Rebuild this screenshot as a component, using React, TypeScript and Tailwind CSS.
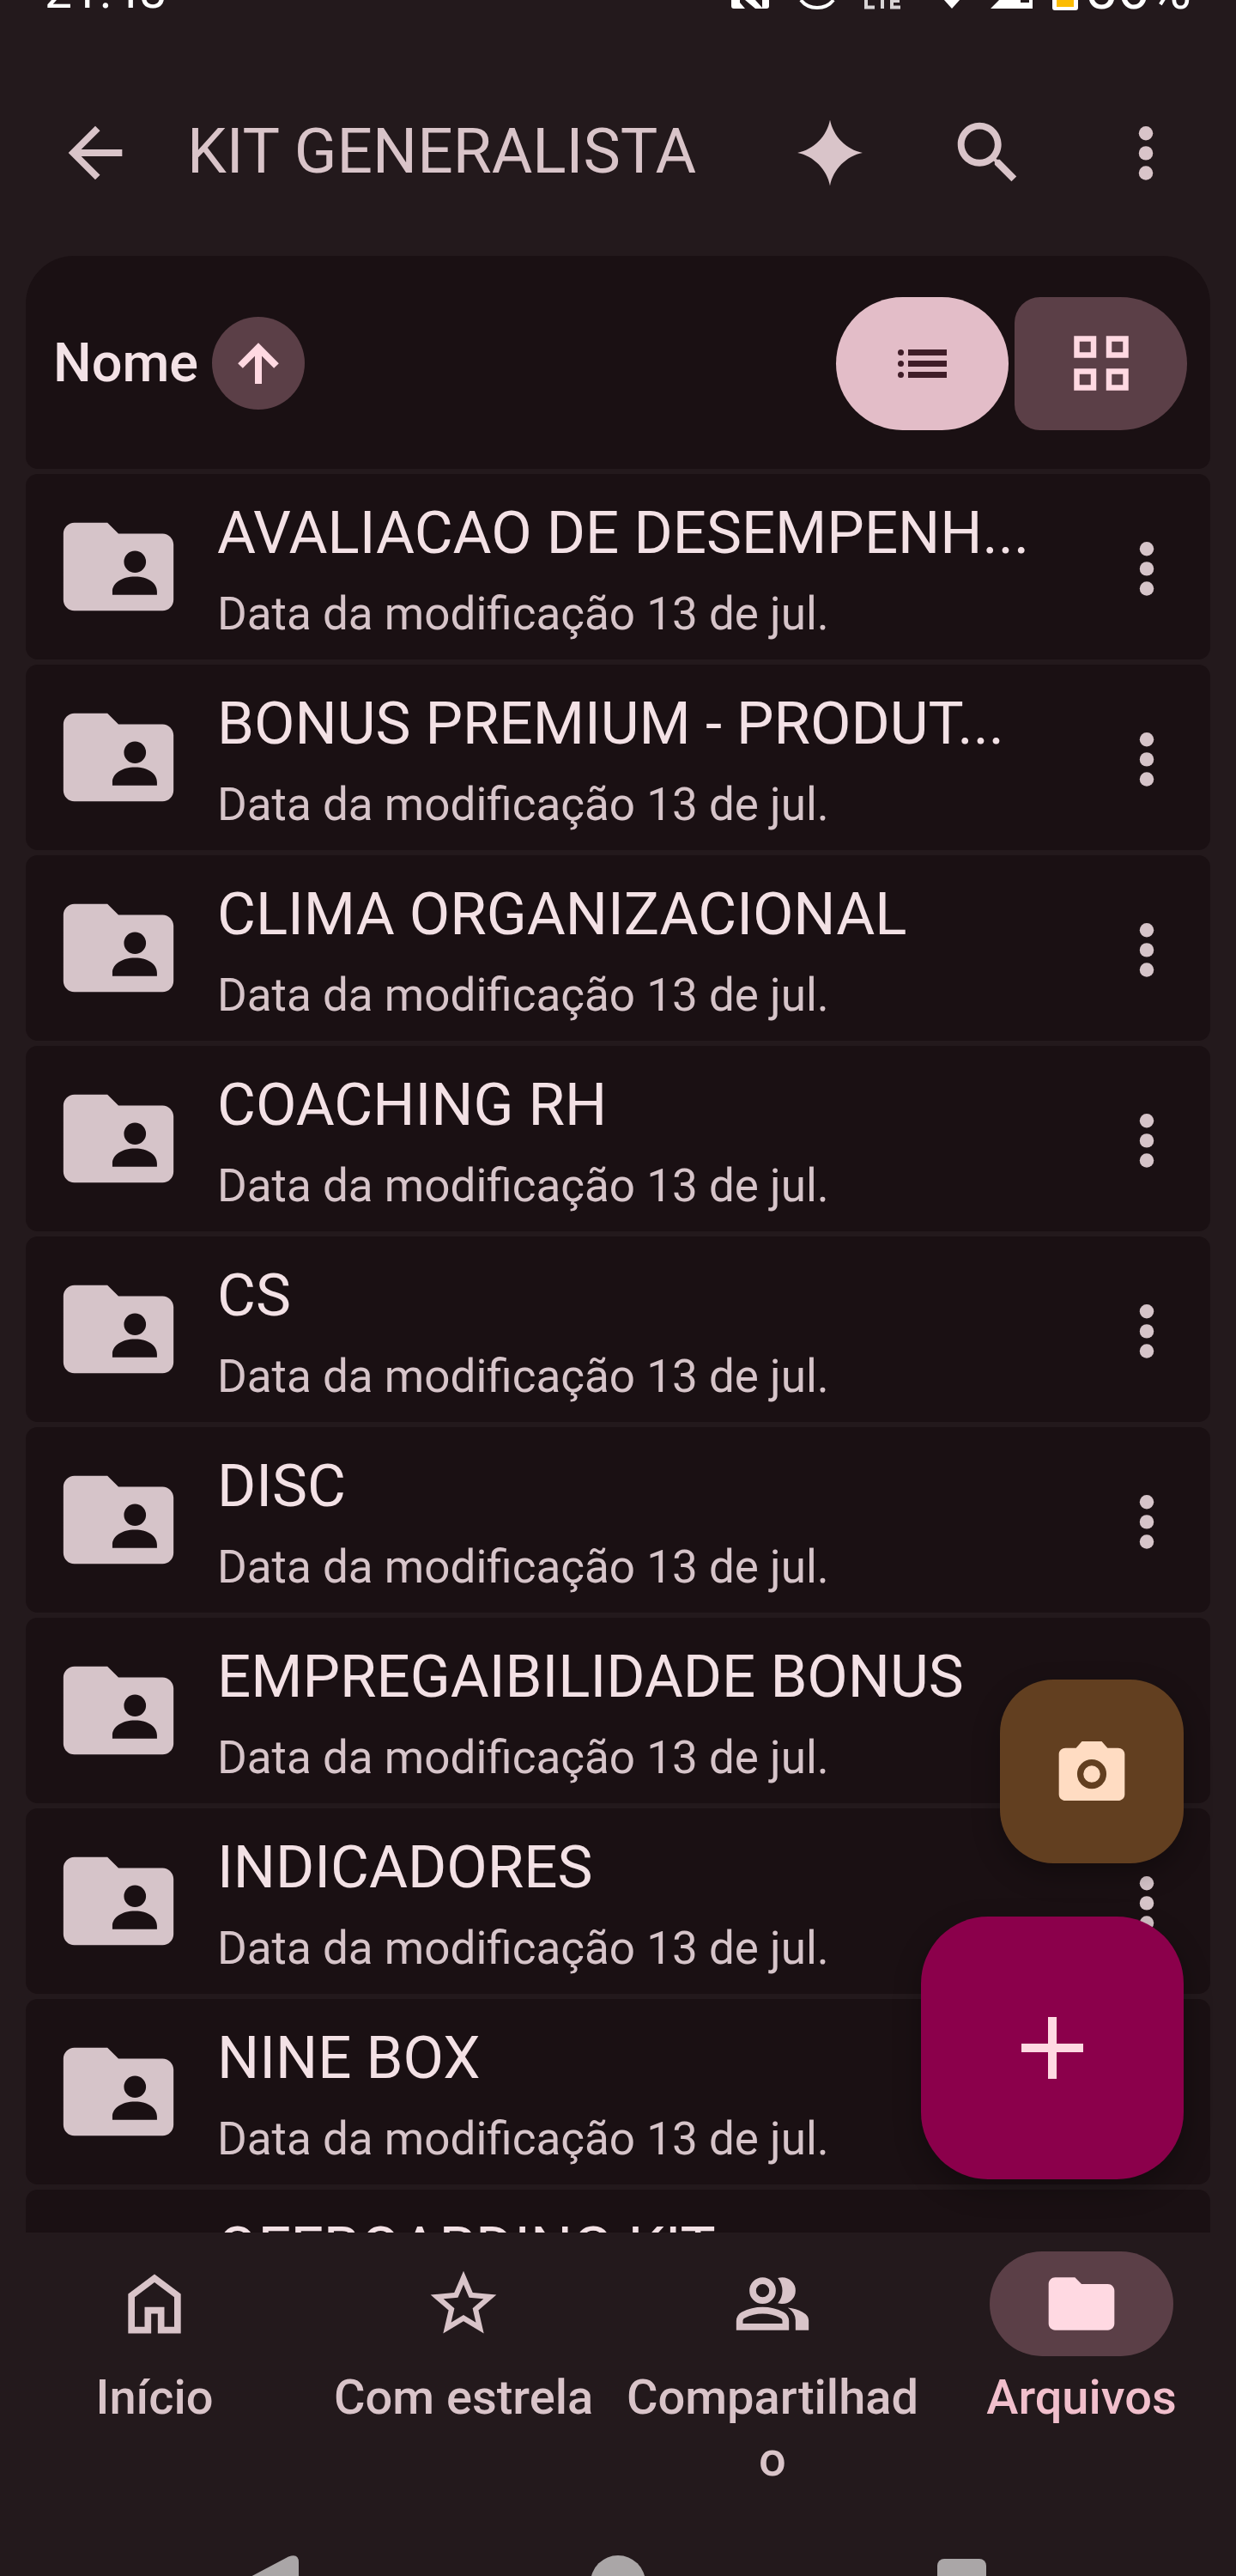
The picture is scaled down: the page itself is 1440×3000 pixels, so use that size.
import type { ReactNode } from "react";
import clsx from "clsx";

const MODIFIED = "Data da modificação 13 de jul.";

const folders = [
  "AVALIACAO DE DESEMPENH...",
  "BONUS PREMIUM - PRODUT...",
  "CLIMA ORGANIZACIONAL",
  "COACHING RH",
  "CS",
  "DISC",
  "EMPREGAIBILIDADE BONUS",
  "INDICADORES",
  "NINE BOX",
  "OFFBOARDING KIT",
];

interface IconProps {
  className?: string;
  children: ReactNode;
}

const Icon = ({ className = "size-[94px]", children }: IconProps) => (
  <svg viewBox="0 0 24 24" fill="currentColor" aria-hidden="true" className={clsx("shrink-0", className)}>
    {children}
  </svg>
);

const MoreIcon = () => (
  <Icon>
    <circle cx="12" cy="6.2" r="2.1" />
    <circle cx="12" cy="12.1" r="2.1" />
    <circle cx="12" cy="18" r="2.1" />
  </Icon>
);

const FOLDER = "M20 6h-8l-2-2H4c-1.1 0-2 .9-2 2v12c0 1.1.9 2 2 2h16c1.1 0 2-.9 2-2V8c0-1.1-.9-2-2-2z";

const tabs = [
  {
    label: "Início",
    icon: <path d="M6 19h3v-6h6v6h3v-9l-6-4.5L6 10zm-2 2V9l8-6 8 6v12h-7v-6h-2v6z" />,
  },
  {
    label: "Com estrela",
    icon: (
      <path d="M22 9.24l-7.19-.62L12 2 9.19 8.63 2 9.24l5.46 4.73L5.82 21 12 17.27 18.18 21l-1.63-7.03zM12 15.4l-3.76 2.27 1-4.28-3.32-2.88 4.38-.38L12 6.1l1.71 4.04 4.38.38-3.32 2.88 1 4.28z" />
    ),
  },
  {
    label: "Compartilhado",
    icon: (
      <path d="M1 20v-2.8q0-.85.438-1.562T2.6 14.55q1.55-.775 3.15-1.162T9 13t3.25.388 3.15 1.162q.725.375 1.163 1.088T17 17.2V20zm18 0v-3q0-1.1-.612-2.113T16.65 13.15q1.275.15 2.4.513t2.1.887q.9.5 1.375 1.112T23 17v3zM9 12q-1.65 0-2.825-1.175T5 8t1.175-2.825T9 4t2.825 1.175T13 8t-1.175 2.825T9 12m10-4q0 1.65-1.175 2.825T15 12q-.275 0-.7-.062t-.7-.138q.675-.8 1.038-1.775T15 8t-.362-2.025T13.6 4.2q.35-.125.7-.162T15 4q1.65 0 2.825 1.175T19 8M3 18h12v-.8q0-.275-.137-.5t-.363-.35q-1.35-.675-2.725-1.012T9 15t-2.775.338T3.5 16.35q-.225.125-.363.35T3 17.2zm6-8q.825 0 1.413-.587T11 8t-.587-1.412T9 6t-1.412.588T7 8t.588 1.413T9 10" />
    ),
  },
  { label: "Arquivos", icon: <path d={FOLDER} />, active: true },
];

// Only the lower edge of the status bar stays in view.
const StatusBar = () => (
  <div className="flex h-3 shrink-0 items-end overflow-hidden px-[52px] text-white">
    <span className="flex-1 text-[57px] leading-[44px]">21:48</span>
    <svg viewBox="0 0 404 12" className="h-3 w-[404px] shrink-0" aria-hidden="true">
      <path d="M0 0h10v3l6 7H3q-3 0-3-3zM16 0h12l8 9V0h8v7q0 3-3 3H28z" fill="#fff" />
      <path d="M81 0q7 9 19 9t19-9" fill="none" stroke="#fff" strokeWidth="4" />
      <path d="M157 0v8.500h10M176 0v10M187 0v8.500h10M187 1h9" fill="none" stroke="#d8d4d5" strokeWidth="4" />
      <path d="M248 0h18l-9 10z" fill="#fff" />
      <path d="M302 10l10-10h25v3h10V0h4v10z" fill="#fff" />
      <path d="M374 0h30v9q0 3-3 3h-24q-3 0-3-3z" fill="#fff" />
      <path d="M379 0h20v8h-20z" fill="#fbbc04" />
    </svg>
    <span className="ml-2 text-[67px] leading-[50px]">56%</span>
  </div>
);

const AppBar = () => (
  <header className="shrink-0 pt-[46px] text-[#d9c4c9]">
    <div className="flex h-60 items-center gap-[90px] pr-[58px] pl-16">
      <div className="flex min-w-0 flex-1 items-center gap-[60px]">
        <button type="button" aria-label="Voltar">
          <Icon>
            <path d="M20 11H7.830l5.590-5.590L12 4l-8 8 8 8 1.410-1.410L7.830 13H20z" />
          </Icon>
        </button>
        <h1 className="mb-1 text-[73px] leading-[96px] whitespace-nowrap">KIT GENERALISTA</h1>
      </div>
      <button type="button" aria-label="Gemini">
        <Icon>
          <path d="M12 2.200C12.900 7.100 16.900 11.100 21.700 12 16.900 12.900 12.900 16.900 12 21.800 11.100 16.900 7.100 12.900 2.300 12 7.100 11.100 11.100 7.100 12 2.200z" />
        </Icon>
      </button>
      <button type="button" aria-label="Pesquisar">
        <Icon>
          <path d="M15.500 14h-.79l-.28-.27C15.410 12.590 16 11.110 16 9.500 16 5.910 13.090 3 9.500 3S3 5.910 3 9.500 5.910 16 9.500 16c1.610 0 3.090-.59 4.230-1.570l.27.28v.79l5 4.990L20.490 19zm-6 0C7.010 14 5 11.990 5 9.500S7.010 5 9.500 5 14 7.010 14 9.500 11.990 14 9.500 14z" />
        </Icon>
      </button>
      <button type="button" aria-label="Mais opções">
        <MoreIcon />
      </button>
    </div>
  </header>
);

const SortBar = () => (
  <div className="flex h-[248px] shrink-0 items-center justify-between rounded-t-[56px] rounded-b-[14px] bg-[#1a1013] pt-0.5 pr-[27px] pl-8">
    <button type="button" className="flex items-center gap-4 text-[63px] leading-[72px] font-medium text-[#f3e2e6]">
      Nome
      <span className="flex size-[108px] items-center justify-center rounded-full bg-[#5b3f47] text-[#ffd9e2]">
        <svg viewBox="0 0 48 48" className="size-12" fill="none" stroke="currentColor" strokeWidth="8" aria-hidden="true">
          <path d="M24 48V6M3 27L24 6l21 21" />
        </svg>
      </span>
    </button>
    <div className="flex gap-[7px]">
      <button
        type="button"
        aria-label="Lista"
        aria-pressed="true"
        className="flex h-[155px] w-[201px] items-center justify-center rounded-full bg-[#e3bdc8] text-[#3f1d28]"
      >
        <svg viewBox="0 0 57 33" className="h-[33px] w-[57px]" fill="currentColor" aria-hidden="true">
          <path d="M12 0h45v7H12zM12 13h45v7H12zM12 26h45v7H12z" />
          <circle cx="3.500" cy="3.500" r="3.500" />
          <circle cx="3.500" cy="16.500" r="3.500" />
          <circle cx="3.500" cy="29.500" r="3.500" />
        </svg>
      </button>
      <button
        type="button"
        aria-label="Grade"
        className="flex h-[155px] w-[201px] items-center justify-center rounded-l-[30px] rounded-r-[78px] bg-[#5b3f47] text-[#ffd9e2]"
      >
        <svg viewBox="0 0 64 64" className="size-16" fill="none" stroke="currentColor" strokeWidth="6.5" aria-hidden="true">
          <path d="M3.500 3.500h19.500v19H3.500zM41 3.500h19.500v19H41zM3.500 41.500h19.500v19H3.500zM41 41.500h19.500v19H41z" />
        </svg>
      </button>
    </div>
  </div>
);

const FolderRow = ({ name }: { name: string }) => (
  <li className="flex h-[216px] shrink-0 items-center rounded-[14px] bg-[#1a1013] pr-[27px] pl-[31px]">
    <Icon className="size-[154px] text-[#d6c4c9]">
      <path
        fillRule="evenodd"
        d={`${FOLDER}M15 9.100a2 2 0 1 1 0 4 2 2 0 1 1 0-4zM10.900 17.100v-.6c0-1.500 1.700-2.700 4.100-2.700s4 1.200 4 2.700v.6z`}
      />
    </Icon>
    <div className="ml-[38px] min-w-0 flex-1 pt-[14px] whitespace-nowrap">
      <p className="text-[69px] leading-[96px] text-[#f3e1e5]">{name}</p>
      <p className="text-[53px] leading-[92px] text-[#d6c4c9]">{MODIFIED}</p>
    </div>
    <button type="button" aria-label={`Mais ações para ${name}`} className="pt-1 text-[#d6c4c9]">
      <MoreIcon />
    </button>
  </li>
);

const FloatingActions = () => (
  <div className="absolute right-[61px] bottom-[62px] flex flex-col items-end gap-[62px]">
    <button
      type="button"
      aria-label="Digitalizar"
      className="flex size-[214px] items-center justify-center rounded-[62px] bg-[#623f20] text-[#ffdcc2] shadow-[0_12px_32px_rgba(0,0,0,0.3)]"
    >
      <Icon className="size-[92px]">
        <path d="M9 2.900L7.200 4.900H4c-1.100 0-2 .8-2 1.900v12.200c0 1.100.9 1.900 2 1.900h16c1.100 0 2-.8 2-1.900V6.800c0-1.100-.9-1.900-2-1.900h-3.200L15 2.900z" />
        <circle cx="12" cy="12.800" r="3.500" fill="none" stroke="#623f20" strokeWidth="1.900" />
      </Icon>
    </button>
    <button
      type="button"
      aria-label="Novo"
      className="flex size-[306px] items-center justify-center rounded-[78px] bg-[#8b004b] text-[#ffd9e2] shadow-[0_12px_32px_rgba(0,0,0,0.3)]"
    >
      <svg viewBox="0 0 72 72" className="size-[72px]" stroke="currentColor" strokeWidth="10" aria-hidden="true">
        <path d="M36 0v72M0 36h72" />
      </svg>
    </button>
  </div>
);

const BottomNav = () => (
  <nav className="grid shrink-0 grid-cols-4 pt-[22px] pb-[76px]">
    {tabs.map(({ label, icon, active }) => (
      <a
        key={label}
        href="#"
        aria-current={active ? "page" : undefined}
        className={clsx("flex flex-col items-center px-2", active ? "text-[#f1bfcc]" : "text-[#d9c4c9]")}
      >
        <span
          className={clsx(
            "flex h-[122px] w-[214px] items-center justify-center rounded-full",
            active && "bg-[#5b3f47] text-[#ffd9e2]",
          )}
        >
          <Icon className="size-[92px]">{icon}</Icon>
        </span>
        <span className="mt-3 h-36 w-full text-center text-[56px] leading-[72px] font-medium break-words">{label}</span>
      </a>
    ))}
  </nav>
);

const SystemNav = () => (
  <div className="flex h-6 shrink-0 items-start justify-between overflow-hidden pr-[291px] pl-[283px] text-[#aaa6a7]">
    <svg viewBox="0 0 65 66" className="h-[66px] w-[65px] shrink-0" fill="currentColor" aria-hidden="true">
      <path d="M3 28L53 1.500Q65-3 65 8v50q0 11-12 6L3 38q-6-5 0-10z" />
    </svg>
    <svg viewBox="0 0 64 64" className="size-16 shrink-0" fill="currentColor" aria-hidden="true">
      <circle cx="32" cy="32" r="32" />
    </svg>
    <svg viewBox="0 0 57 64" className="h-16 w-[57px] shrink-0" fill="currentColor" aria-hidden="true">
      <rect y="4" width="57" height="57" rx="8" />
    </svg>
  </div>
);

export default function App() {
  return (
    <div className="flex h-screen flex-col overflow-hidden bg-[#23191c] font-['Roboto',sans-serif]">
      <StatusBar />
      <AppBar />
      <main className="relative flex min-h-0 flex-1 flex-col gap-[6px] overflow-hidden px-[30px]">
        <SortBar />
        <ul className="flex min-h-0 flex-1 flex-col gap-[6px] overflow-hidden">
          {folders.map((name) => (
            <FolderRow key={name} name={name} />
          ))}
        </ul>
        <FloatingActions />
      </main>
      <BottomNav />
      <SystemNav />
    </div>
  );
}
